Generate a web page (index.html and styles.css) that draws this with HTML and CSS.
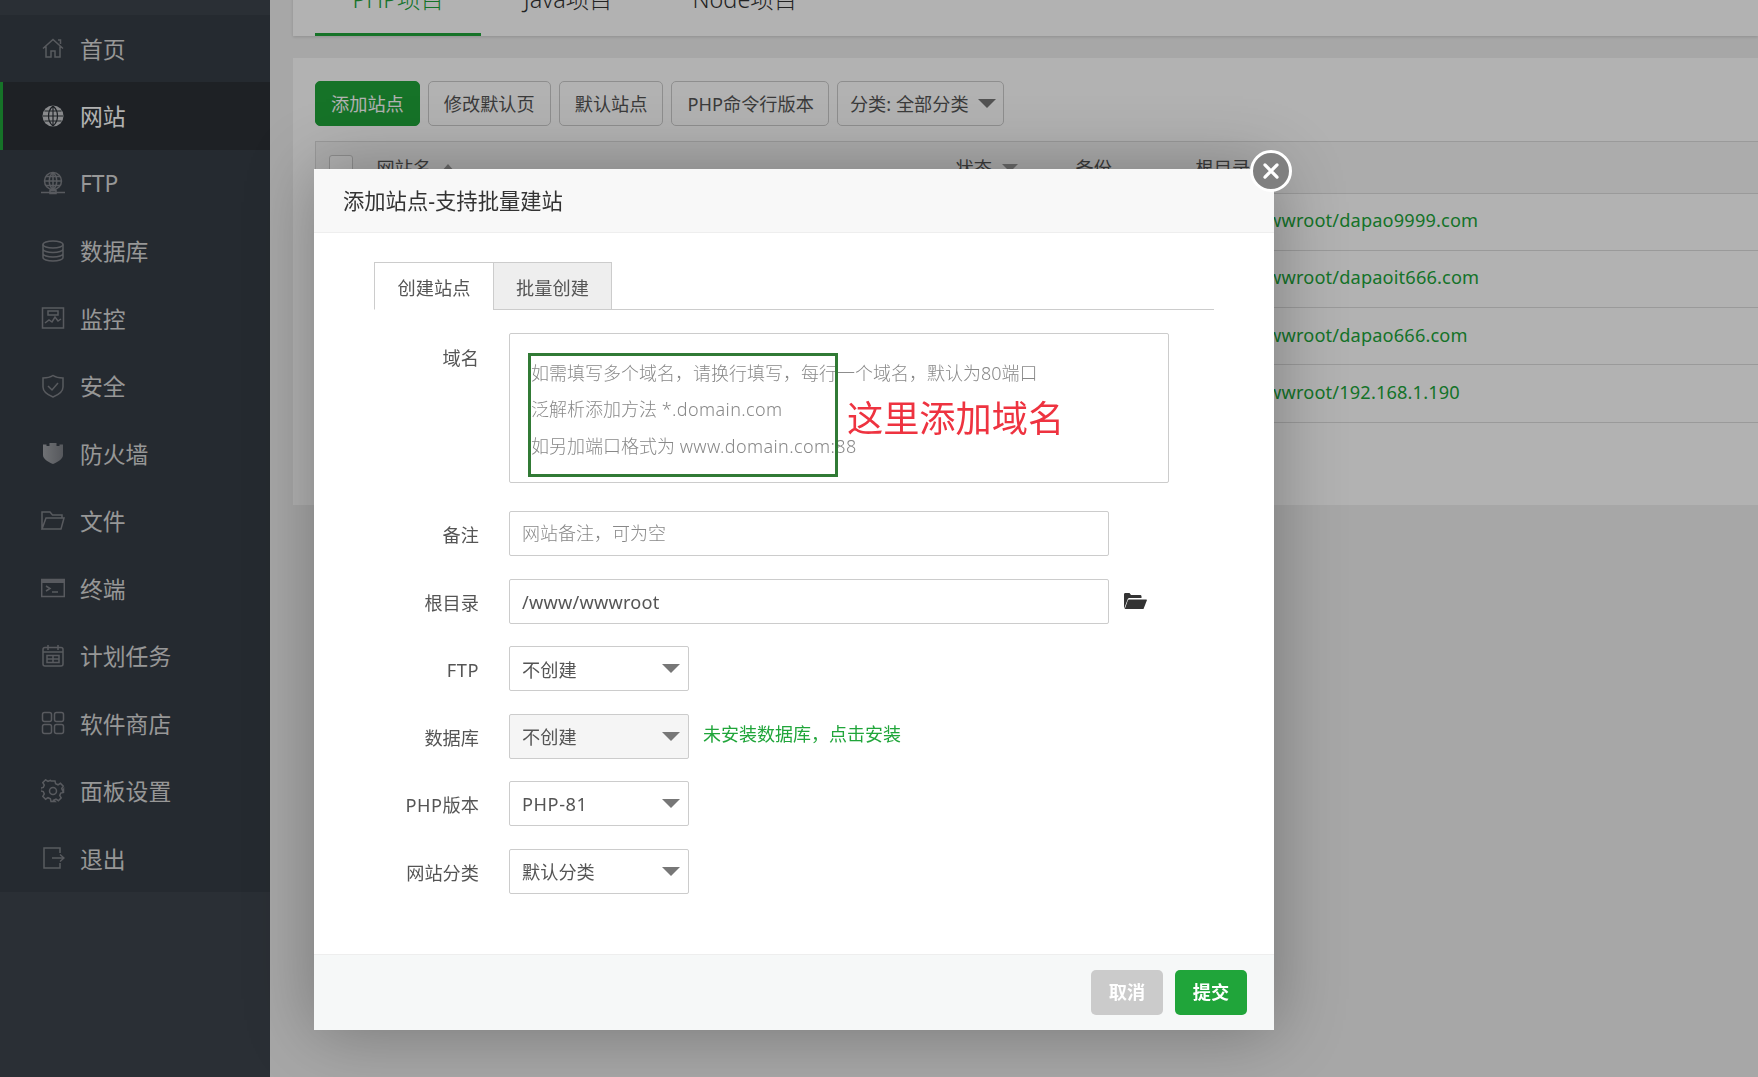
FILE: index.html
```html
<!DOCTYPE html>
<html lang="zh-CN">
<head>
  <meta charset="UTF-8" />
  <title>添加站点</title>
  <link rel="stylesheet" href="styles.css">
</head>
<body>
  <aside class="sidebar">
    <nav class="menu">
      <a class="menu-item"><svg viewBox="0 0 24 24"><path d="M2 12.500 12 3.500l10 9M5 10.500V21h5v-6h4v6h5V10.500M17 4h2.500v4"/></svg>首页</a>
      <a class="menu-item active"><svg viewBox="0 0 24 24"><circle class="solid" cx="12" cy="12" r="10.500"/><path class="cut" d="M12 2c-6 5-6 15 0 20M12 2c6 5 6 15 0 20M12 2v20M2 12h20M3.500 7h17M3.500 17h17"/></svg>网站</a>
      <a class="menu-item"><svg viewBox="0 0 24 24"><circle cx="12" cy="10" r="8.500"/><path d="M12 1.500c-5 4-5 13 0 17M12 1.500c5 4 5 13 0 17M12 1.500v17M3.500 10h17M5 5.500h14M5 14.500h14M0 21.500h24M9 19.500h6v3H9z"/></svg>FTP</a>
      <a class="menu-item"><svg viewBox="0 0 24 24"><ellipse cx="12" cy="5.500" rx="10" ry="3.500"/><path d="M2 5.500v13c0 2 4.500 3.500 10 3.500s10-1.500 10-3.500v-13M2 10c0 2 4.500 3.500 10 3.500S22 12 22 10M2 14.500c0 2 4.500 3.500 10 3.500s10-1.500 10-3.500"/></svg>数据库</a>
      <a class="menu-item"><svg viewBox="0 0 24 24"><path d="M1.500 2h21v20h-21zM4 17l4-3 3 2 3-5 3 4 3-2M7 5h10v4H7z"/></svg>监控</a>
      <a class="menu-item"><svg viewBox="0 0 24 24"><path d="M12 1.500c3 2 6 2.500 10 2.500v9c0 5-5 8-10 10C7 21 2 18 2 13V4c4 0 7-.5 10-2.500zM7 12l4 4 6-7"/></svg>安全</a>
      <a class="menu-item"><svg viewBox="0 0 24 24"><defs><linearGradient id="wallFill"><stop offset="0" stop-color="#a0a3a8"/><stop offset="1" stop-color="#7c7f85"/></linearGradient></defs><path fill="url(#wallFill)" stroke="none" d="M2 3.500h3.500v1.500h3V2h7v3h3V3.500H22V14c0 4-5 7-10 9C7 21 2 18 2 14z"/></svg>防火墙</a>
      <a class="menu-item"><svg viewBox="0 0 24 24"><path d="M1 20V3h8l2.500 3H21v3M1 20h19l3-11H5z"/></svg>文件</a>
      <a class="menu-item"><svg viewBox="0 0 24 24"><path class="solid" d="M0 3h24v4H0z"/><path d="M.7 3.500h22.600v17H.7zM5 10l4 2.500L5 15M11 16h6"/></svg>终端</a>
      <a class="menu-item"><svg viewBox="0 0 24 24"><rect x="2" y="3.500" width="20" height="18.500" rx="2"/><path d="M7 1v5M17 1v5M2 8h20M6 11.500h12v7H6zM12 11.500v7M6 15h12"/></svg>计划任务</a>
      <a class="menu-item"><svg viewBox="0 0 24 24"><rect x="1.500" y="1.500" width="9" height="9" rx="2"/><rect x="13.500" y="1.500" width="9" height="9" rx="2"/><rect x="1.500" y="13.500" width="9" height="9" rx="2"/><rect x="13.500" y="13.500" width="9" height="9" rx="2"/></svg>软件商店</a>
      <a class="menu-item"><svg viewBox="0 0 24 24"><circle cx="12" cy="12" r="3.500"/><path d="M10 2h4l.6 2.800 2.400 1 2.400-1.500 2.800 2.800-1.500 2.400 1 2.400L22.500 10.500v3l-2.800.6-1 2.400 1.500 2.400-2.800 2.800-2.400-1.500-2.400 1L14 22.500h-4l-.6-2.800-2.400-1-2.400 1.500-2.800-2.800 1.500-2.400-1-2.400-2.800-.6v-3l2.800-.6 1-2.400-1.500-2.400 2.800-2.800 2.400 1.500 2.400-1z"/></svg>面板设置</a>
      <a class="menu-item"><svg viewBox="0 0 24 24"><path d="M19 7V2H3v20h16v-5M11 12h12M19 8.500l4 3.500-4 3.500"/></svg>退出</a>
    </nav>
  </aside>

  <main class="content">
    <div class="panel tabs-panel">
      <a class="site-tab current">PHP项目</a>
      <a class="site-tab">Java项目</a>
      <a class="site-tab">Node项目</a>
    </div>

    <section class="panel list-panel">
      <div class="toolbar">
        <a class="btn btn-green">添加站点</a>
        <a class="btn">修改默认页</a>
        <a class="btn">默认站点</a>
        <a class="btn btn-php">PHP命令行版本</a>
        <a class="btn btn-drop">分类: 全部分类<i class="caret"></i></a>
      </div>
      <table class="site-table">
        <colgroup>
          <col class="col-check"><col class="col-name"><col class="col-status"><col class="col-backup"><col>
        </colgroup>
        <thead>
          <tr>
            <th><span class="checkbox"></span></th>
            <th>网站名<i class="sort up"></i></th>
            <th>状态<i class="sort"></i></th>
            <th>备份</th>
            <th>根目录</th>
          </tr>
        </thead>
        <tbody>
          <tr><td></td><td>dapao9999.com</td><td></td><td></td><td class="path">/www/wwwroot/dapao9999.com</td></tr>
          <tr><td></td><td>dapaoit666.com</td><td></td><td></td><td class="path">/www/wwwroot/dapaoit666.com</td></tr>
          <tr><td></td><td>dapao666.com</td><td></td><td></td><td class="path">/www/wwwroot/dapao666.com</td></tr>
          <tr><td></td><td>192.168.1.190</td><td></td><td></td><td class="path">/www/wwwroot/192.168.1.190</td></tr>
        </tbody>
      </table>
    </section>
  </main>

  <div class="shade"></div>

  <div class="dialog">
    <a class="dialog-close"><svg viewBox="0 0 20 20"><path d="M4.500 4.500l11 11M15.500 4.500l-11 11"/></svg></a>
    <div class="dialog-title">添加站点-支持批量建站</div>
    <div class="dialog-body">
      <div class="form-tabs">
        <span class="form-tab on">创建站点</span>
        <span class="form-tab">批量创建</span>
      </div>

      <div class="form-row row-domain">
        <label>域名</label>
        <div class="domain-box">
          <p>如需填写多个域名，请换行填写，每行一个域名，默认为80端口</p>
          <p>泛解析添加方法 <span class="lat">*.domain.com</span></p>
          <p>如另加端口格式为 <span class="lat">www.domain.com:88</span></p>
          <div class="mark-rect"></div>
          <div class="mark-text">这里添加域名</div>
        </div>
      </div>

      <div class="form-row">
        <label>备注</label>
        <div class="field hint">网站备注，可为空</div>
      </div>

      <div class="form-row">
        <label>根目录</label>
        <div class="field path-value">/www/wwwroot</div>
        <svg class="folder" viewBox="0 0 24 18"><path d="M1 17V2.500C1 1.500 1.500 1 2.500 1h4l1.500 2h9c1 0 1.500.5 1.500 1.500V6H6.500C5.500 6 5 6.500 4.600 7.500z"/><path d="M6 7.500h17c.7 0 1 .5.800 1.100L20.500 17H1.800l3-8.500C5 8 5.400 7.500 6 7.500z"/></svg>
      </div>

      <div class="form-row">
        <label class="lat">FTP</label>
        <div class="pick">不创建<i class="caret"></i></div>
      </div>

      <div class="form-row">
        <label>数据库</label>
        <div class="pick off">不创建<i class="caret"></i></div>
        <a class="install-link">未安装数据库，点击安装</a>
      </div>

      <div class="form-row">
        <label><span class="lat">PHP</span>版本</label>
        <div class="pick"><span class="lat">PHP-81</span><i class="caret"></i></div>
      </div>

      <div class="form-row">
        <label>网站分类</label>
        <div class="pick">默认分类<i class="caret"></i></div>
      </div>
    </div>
    <div class="dialog-foot">
      <a class="foot-btn grey">取消</a>
      <a class="foot-btn green">提交</a>
    </div>
  </div>
</body>
</html>
```

FILE: styles.css
```css
* {
  margin: 0;
  padding: 0;
  box-sizing: border-box;
}

html, body {
  height: 100%;
  overflow: hidden;
}

body {
  display: flex;
  background-color: #f0f0f0;
  font-family: "Noto Sans", "Noto Sans CJK SC", sans-serif;
  font-size: 18.2px;
  color: #555;
}

.lat {
  letter-spacing: .55px;
}

/* sidebar */
.sidebar {
  flex: 0 0 270px;
  background-color: #3d444c;
  padding-top: 14.5px;
}

.menu {
  background-color: #363d45;
}

.menu-item {
  display: flex;
  align-items: center;
  gap: 15px;
  height: 67.5px;
  padding-left: 41px;
  font-size: 22.8px;
  color: #d8d8d8;
}

.menu-item svg {
  width: 24px;
  height: 24px;
  flex-shrink: 0;
  fill: none;
  stroke: #7f8288;
  stroke-width: 1.5;
}

.menu-item svg .solid {
  fill: #7f8288;
  stroke: none;
}

.menu-item svg .cut {
  stroke: #363d45;
  stroke-width: 1.2;
}

.menu-item.active {
  background-color: #2b3036;
  box-shadow: inset 3px 0 0 #20a53a;
  color: #fff;
}

.menu-item.active svg .solid {
  fill: #c4c6c9;
}

.menu-item.active svg .cut {
  stroke: #2b3036;
}

/* page behind the dialog */
.content {
  flex: 1;
  min-width: 0;
  padding-left: 23px;
  margin-top: -40px;
}

.panel {
  background-color: #fff;
}

.tabs-panel {
  display: flex;
  gap: 5px;
  height: 76px;
  padding-left: 22px;
  box-shadow: 0 1px 3px rgba(0, 0, 0, .15);
}

.site-tab {
  padding: 0 37.5px;
  font-size: 23.4px;
  font-weight: 300;
  line-height: 78px;
  color: #333;
}

.site-tab.current {
  color: #20a53a;
  border-bottom: 3px solid #20a53a;
}

.list-panel {
  height: 447px;
  margin-top: 22px;
  padding: 23px 0 0 22px;
}

.toolbar {
  display: flex;
  gap: 8px;
  margin-bottom: 15px;
}

.btn {
  display: flex;
  align-items: center;
  height: 45px;
  padding: 0 15px 2px;
  border: 1px solid #ccc;
  border-radius: 5px;
  white-space: nowrap;
}

.btn-green {
  background-color: #20a53a;
  border-color: #20a53a;
  color: #fff;
}

.btn-php {
  padding-right: 14px;
}

.btn-drop {
  gap: 9px;
  padding: 0 7px 2px 12px;
}

.btn-drop .caret {
  margin-top: 2px;
}

.caret {
  display: block;
  border-style: solid;
  border-width: 9px 9px 0;
  border-color: #777 transparent transparent;
}

.site-table {
  width: 100%;
  table-layout: fixed;
  border-collapse: collapse;
  border-top: 1px solid #ddd;
  border-left: 1px solid #ddd;
}

.col-check { width: 61px; }
.col-name { width: 579px; }
.col-status { width: 120px; }
.col-backup { width: 120px; }

.site-table th {
  height: 51.5px;
  font-weight: 400;
  text-align: left;
  background-color: #f6f6f6;
}

.site-table td {
  height: 57.3px;
  padding-bottom: 3px;
  border-top: 1px solid #ddd;
  border-bottom: 1px solid #ddd;
  white-space: nowrap;
}

.site-table .path {
  color: #20a53a;
  letter-spacing: .15px;
}

.checkbox {
  display: block;
  width: 24px;
  height: 24px;
  margin-left: 13px;
  background-color: #fff;
  border: 1px solid #ccc;
  border-radius: 3px;
}

.sort {
  display: inline-block;
  margin-left: 10px;
  vertical-align: 3px;
  border-style: solid;
  border-width: 8px 8px 0;
  border-color: #999 transparent transparent;
}

.sort.up {
  border-width: 0 7px 8px;
  border-color: transparent transparent #999;
}

.shade {
  position: fixed;
  inset: 0;
  background-color: rgba(0, 0, 0, .3);
}

/* dialog */
.dialog {
  position: absolute;
  left: 314px;
  top: 169px;
  width: 960px;
  height: 861px;
  display: flex;
  flex-direction: column;
  background-color: #fff;
  box-shadow: 1px 1px 65px rgba(0, 0, 0, .3);
}

.dialog-close {
  position: absolute;
  top: -19px;
  right: -18px;
  width: 42px;
  height: 42px;
  background-color: #808080;
  border: 3.5px solid #fff;
  border-radius: 50%;
}

.dialog-close svg {
  display: block;
  width: 100%;
  height: 100%;
  padding: 7px;
  fill: none;
  stroke: #fff;
  stroke-width: 3;
  stroke-linecap: round;
}

.dialog-title {
  flex-shrink: 0;
  height: 64px;
  padding-left: 29px;
  font-size: 21.3px;
  line-height: 64px;
  color: #333;
  background-color: #f8f8f8;
  border-bottom: 1px solid #eee;
}

.dialog-body {
  flex: 1;
  padding: 29px 60px 0;
}

.form-tabs {
  display: flex;
  height: 48px;
  margin-bottom: 23px;
  border-bottom: 1px solid #ccc;
}

.form-tab {
  width: 119px;
  height: 48px;
  line-height: 50px;
  text-align: center;
  background-color: #eee;
  border: 1px solid #ccc;
}

.form-tab.on {
  background-color: #fff;
  border-right: 0;
  border-bottom-color: #fff;
}

.form-row {
  display: flex;
  align-items: flex-start;
  margin-bottom: 22.5px;
}

.row-domain {
  margin-bottom: 28px;
}

.form-row label {
  flex: 0 0 105px;
  height: 45px;
  margin-right: 30px;
  line-height: 48px;
  text-align: right;
}

.row-domain label {
  line-height: 50px;
}

.domain-box {
  position: relative;
  width: 660px;
  height: 150px;
  padding: 21px 0 0 21px;
  border: 1px solid #ccc;
  border-radius: 2px;
  font-size: 18px;
  font-weight: 300;
  line-height: 36.4px;
  color: #888;
}

.domain-box .lat {
  letter-spacing: .4px;
}

.mark-rect {
  position: absolute;
  left: 18px;
  top: 19px;
  width: 310px;
  height: 124px;
  border: 3px solid #317a35;
}

.mark-text {
  position: absolute;
  left: 337px;
  top: 60px;
  font-size: 36.2px;
  font-weight: 400;
  line-height: 48px;
  color: #ee3340;
  white-space: nowrap;
}

.field {
  width: 600px;
  height: 45px;
  padding-left: 12px;
  border: 1px solid #ccc;
  border-radius: 2px;
  line-height: 44px;
}

.field.path-value {
  letter-spacing: .2px;
}

.field.hint {
  font-size: 18px;
  font-weight: 300;
  line-height: 43px;
  color: #888;
}

.folder {
  width: 24px;
  height: 18px;
  margin: 13px 0 0 14px;
  fill: #333;
}

.pick {
  display: flex;
  align-items: center;
  justify-content: space-between;
  width: 180px;
  height: 45px;
  padding: 0 8px 0 12px;
  border: 1px solid #ccc;
  border-radius: 2px;
}

.pick.off {
  background-color: #f5f5f5;
}

.install-link {
  margin-left: 14px;
  font-size: 18px;
  line-height: 41px;
  color: #20a53a;
}

.dialog-foot {
  flex-shrink: 0;
  display: flex;
  justify-content: flex-end;
  gap: 12px;
  height: 76px;
  padding: 15px 27px 0 0;
  background-color: #f6f8f8;
  border-top: 1px solid #eee;
}

.foot-btn {
  width: 72px;
  height: 45px;
  font-weight: 700;
  line-height: 44px;
  text-align: center;
  color: #fff;
  border-radius: 5px;
}

.foot-btn.grey {
  background-color: #cbcbcb;
}

.foot-btn.green {
  background-color: #20a53a;
}
```
